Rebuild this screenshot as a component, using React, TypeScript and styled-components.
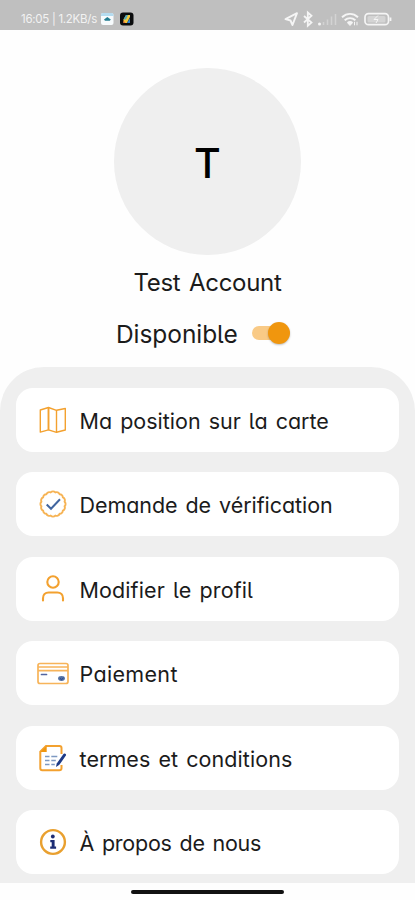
import React from "react";
import styled, { createGlobalStyle } from "styled-components";

const ORANGE = "#f3a12f";
const NAVY = "#1d3a86";

const GlobalStyle = createGlobalStyle`
  * { box-sizing: border-box; }
  html, body { margin: 0; padding: 0; background: #fff; }
  body {
    font-family: Inter, "Noto Sans", sans-serif;
    font-feature-settings: "cv11" 1, "cv05" 1;
    color: #1b1b1b;
  }
`;

const Screen = styled.main`
  width: 415px;
  height: 900px;
  display: flex;
  flex-direction: column;
  align-items: center;
  background: #fefefe;
  overflow: hidden;
`;

const StatusBar = styled.header`
  width: 100%;
  height: 30px;
  flex: none;
  display: flex;
  justify-content: space-between;
  padding: 7px 22px 0 21px;
  background: #bfbfbf;
  color: #f2f2f2;
`;

const StatusGroup = styled.div`
  display: flex;
  height: 24px;
  align-items: center;
`;

const Clock = styled.span<{ $tracking: number }>`
  font-size: 11.5px;
  line-height: 24px;
  width: 80px;
  white-space: nowrap;
  letter-spacing: ${(p) => p.$tracking}px;
`;

const Avatar = styled.div`
  width: 187px;
  height: 187px;
  flex: none;
  margin-top: 38px;
  border-radius: 50%;
  background: #efefef;
  display: flex;
  align-items: center;
  justify-content: center;
  padding-top: 3px;
  font-size: 41px;
  font-weight: 500;
  color: #000;
`;

const Name = styled.h1<{ $tracking: number }>`
  margin: 13px 0 0;
  height: 30px;
  font-size: 24px;
  font-weight: 400;
  line-height: 30px;
  white-space: nowrap;
  word-spacing: 2px;
  letter-spacing: ${(p) => p.$tracking}px;
`;

const Availability = styled.div`
  width: 100%;
  height: 30px;
  margin-top: 21px;
  padding-left: 115px;
  display: flex;
  align-items: center;
`;

const AvailabilityLabel = styled.span<{ $tracking: number }>`
  width: 137px;
  padding-left: 1px;
  font-size: 24.5px;
  line-height: 30px;
  letter-spacing: ${(p) => p.$tracking}px;
`;

const Track = styled.button`
  width: 37px;
  height: 14px;
  margin-top: -2px;
  padding: 0;
  border: 0;
  border-radius: 7px;
  background: #f9ca86;
  display: flex;
  align-items: center;
  justify-content: flex-end;
`;

const Thumb = styled.span`
  width: 22px;
  height: 22px;
  flex: none;
  margin-right: -1px;
  border-radius: 50%;
  background: #f0960e;
  box-shadow: 0 1px 2px rgba(0, 0, 0, 0.25);
`;

const Panel = styled.nav`
  width: 100%;
  height: 516px;
  flex: none;
  margin-top: 18px;
  padding: 20.5px 16px 0;
  border-radius: 44px 44px 0 0;
  background: #efefef;
  display: flex;
  flex-direction: column;
  gap: 20.6px;
`;

const Row = styled.a`
  height: 64px;
  flex: none;
  border-radius: 17px;
  background: #fff;
  display: flex;
  align-items: center;
  padding-left: 20px;
`;

const IconSlot = styled.span`
  width: 34px;
  height: 32px;
  margin-right: 9.5px;
  display: flex;
  align-items: center;
  justify-content: center;
`;

const Label = styled.span<{ $tracking: number }>`
  font-size: 21.5px;
  line-height: 28px;
  padding-top: 2px;
  white-space: nowrap;
  word-spacing: 2px;
  letter-spacing: ${(p) => p.$tracking}px;
`;

const HomeBar = styled.div`
  width: 153px;
  height: 4px;
  flex: none;
  margin-top: 7px;
  border-radius: 2px;
  background: #111;
`;

const MapIcon = () => (
  <svg width="34" height="32" viewBox="0 0 34 32" fill="none" stroke={ORANGE} strokeWidth="1.4" strokeLinejoin="round">
    <path d="M4.300 6 12.500 3.500l8 2.800L29.300 4.500v21.500l-8.800 2.300-8-2.500-8.200 2.300z" />
    <path d="M12.500 3.500v22.300" strokeWidth="1.9" />
    <path d="M20.500 6.300v22" />
  </svg>
);

const scallops = Array.from({ length: 16 }, (_, i) => {
  const at = (n: number) => {
    const a = ((n - 0.5) * Math.PI) / 8;
    return `${(17 + 11.8 * Math.sin(a)).toFixed(2)} ${(16 - 11.8 * Math.cos(a)).toFixed(2)}`;
  };
  return `${i === 0 ? `M${at(0)}` : ""}A3.1 3.1 0 0 1 ${at(i + 1)}`;
}).join("");

const VerifyIcon = () => (
  <svg width="34" height="32" viewBox="0 0 34 32" fill="none">
    <path d={scallops + "Z"} stroke="#f6b354" strokeWidth="1.9" strokeLinejoin="round" />
    <path d="m10.700 16.500 4.300 4.300 9-9.500" stroke="#41659f" strokeWidth="2" />
  </svg>
);

const PersonIcon = () => (
  <svg width="34" height="32" viewBox="0 0 34 32" fill="none" stroke={ORANGE} strokeWidth="2.1" strokeLinecap="round">
    <circle cx="17" cy="9" r="5.700" />
    <path d="M7 27.500v-2.300c0-3.500 2.300-5.700 5.700-5.700h8.600c3.400 0 5.700 2.200 5.700 5.700v2.300" />
  </svg>
);

const CardIcon = () => (
  <svg width="34" height="32" viewBox="0 0 34 32" fill="none" stroke="#f7b45a">
    <rect x="2" y="6.500" width="30" height="20" rx="2" strokeWidth="1.700" />
    <path d="M2 10h30M2 13.700h30" strokeWidth="1.700" />
    <path d="M5.500 17.500h5" stroke="#5265a0" strokeWidth="1.700" strokeLinecap="round" />
    <ellipse cx="25.500" cy="21.500" rx="3.400" ry="2.400" fill="#5371a4" stroke="none" />
    <path d="m24 21.500 1.700 1 1.800-1.600" stroke="#263d83" strokeWidth="0.900" />
  </svg>
);

const TermsIcon = () => (
  <svg width="34" height="32" viewBox="0 0 34 32" fill="none">
    <path d="M25.500 12V6c0-1.500-.7-2-2-2H10L4.300 9.700v16.600c0 1.400.6 2 2 2h17c1.500 0 2.200-.7 2.200-2V23" stroke={ORANGE} strokeWidth="2" />
    <path d="M10.700 4v6H4.300z" fill="#f0960e" />
    <path d="M9 14.500h4.500m1.800 0h6M9 18.500h4.500m1.800 0h4.500M9 22.500h4.500m1.800 0h3.500" stroke="#7d99c1" strokeWidth="1.700" />
    <path d="m22.500 21.500 6-8.500" stroke={NAVY} strokeWidth="3" strokeLinecap="round" />
    <path d="m20 25 .8-4 2.600 1.800z" fill={NAVY} />
  </svg>
);

const InfoIcon = () => (
  <svg width="34" height="32" viewBox="0 0 34 32" fill="none">
    <circle cx="17" cy="16" r="11.900" stroke="#e9a02f" strokeWidth="2.400" />
    <circle cx="16.800" cy="10.500" r="1.900" fill="#1c2c74" />
    <path d="M14.300 14h4.300v6.500h1.500v2.300h-5.900v-2.300h1.500v-4.200h-1.400z" fill="#1c2c74" />
  </svg>
);

const items = [
  { label: "Ma position sur la carte", Icon: MapIcon, tracking: 0 },
  { label: "Demande de vérification", Icon: VerifyIcon, tracking: -0.06 },
  { label: "Modifier le profil", Icon: PersonIcon, tracking: 0.11 },
  { label: "Paiement", Icon: CardIcon, tracking: 0.33 },
  { label: "termes et conditions", Icon: TermsIcon, tracking: 0.06 },
  { label: "À propos de nous", Icon: InfoIcon, tracking: -0.24 },
];

const NotificationIcons = () => (
  <svg width="34" height="16" viewBox="0 0 34 16">
    <rect x="0" y="2" width="12.500" height="12" rx="2" fill="#f7fbfd" />
    <path d="M0 5V4c0-1.300.7-2 2-2h8.500c1.300 0 2 .7 2 2v1z" fill="#b5dcf0" />
    <path d="M3 8.500 6.300 6l3.500 2.500-1 1.200H4z" fill="#247d91" />
    <rect x="19" y="1.500" width="13.500" height="13" rx="3" fill="#0b0c0d" />
    <path d="M22.500 12V8.500L25 4h4v2l-3 6z" fill="#f2c83b" />
    <path d="M22.500 8.500 25 4h2l-2 4.500z" fill="#4ba7bf" />
    <path d="m26 12 3-5v5z" fill="#2d83d2" />
    <path d="M22.500 9.500V12h2z" fill="#e56a42" />
  </svg>
);

const SystemIcons = () => (
  <svg width="109" height="18" viewBox="0 0 109 18" fill="none" stroke="#f5f5f5">
    <path d="M1.500 9.200 13 3.200 8.500 15 6.500 10.500z" strokeWidth="1.900" strokeLinejoin="round" />
    <path d="m20 6 7.500 6.500-3.700 3.300V2.500l3.700 3.200L20 12.500" strokeWidth="1.800" />
    <circle cx="35.500" cy="14" r="1.500" fill="#f5f5f5" stroke="none" />
    <path d="M39.500 15v-3M43.500 15v-5.500M47.500 15V6.500M51.500 15V4" stroke="#d3d3d3" strokeWidth="1.500" />
    <path d="M58 7.200c5-4.300 11-4.300 16 0M60.700 10.200c3.200-2.600 7.500-2.600 10.700 0M63.500 13c1.600-1.200 3.500-1.200 5 0" strokeWidth="2" />
    <path d="m66 15.500-2-2.200h4zM70.500 15.300v-3.500m2.500 0v3.500" fill="#f5f5f5" strokeWidth="1" />
    <rect x="81" y="3.700" width="23.500" height="11" rx="3.500" strokeWidth="1.700" />
    <path d="M106.500 7.500v3.500" strokeWidth="1.800" />
    <rect x="83.500" y="6" width="18" height="6.500" rx="1.500" fill="#d4d4d4" stroke="none" />
    <path d="m94 5.500-4 4h4l-2 3.500" strokeWidth="1" />
  </svg>
);

export default function App() {
  return (
    <>
      <GlobalStyle />
      <Screen>
        <StatusBar>
          <StatusGroup>
            <Clock $tracking={-0.28}>16:05 | 1.2KB/s</Clock>
            <NotificationIcons />
          </StatusGroup>
          <StatusGroup>
            <SystemIcons />
          </StatusGroup>
        </StatusBar>
        <Avatar>T</Avatar>
        <Name $tracking={-0.28}>Test Account</Name>
        <Availability>
          <AvailabilityLabel $tracking={-0.07}>Disponible</AvailabilityLabel>
          <Track role="switch" aria-checked="true" aria-label="Disponible">
            <Thumb />
          </Track>
        </Availability>
        <Panel>
          {items.map(({ label, Icon, tracking }) => (
            <Row key={label}>
              <IconSlot>
                <Icon />
              </IconSlot>
              <Label $tracking={tracking}>{label}</Label>
            </Row>
          ))}
        </Panel>
        <HomeBar />
      </Screen>
    </>
  );
}
